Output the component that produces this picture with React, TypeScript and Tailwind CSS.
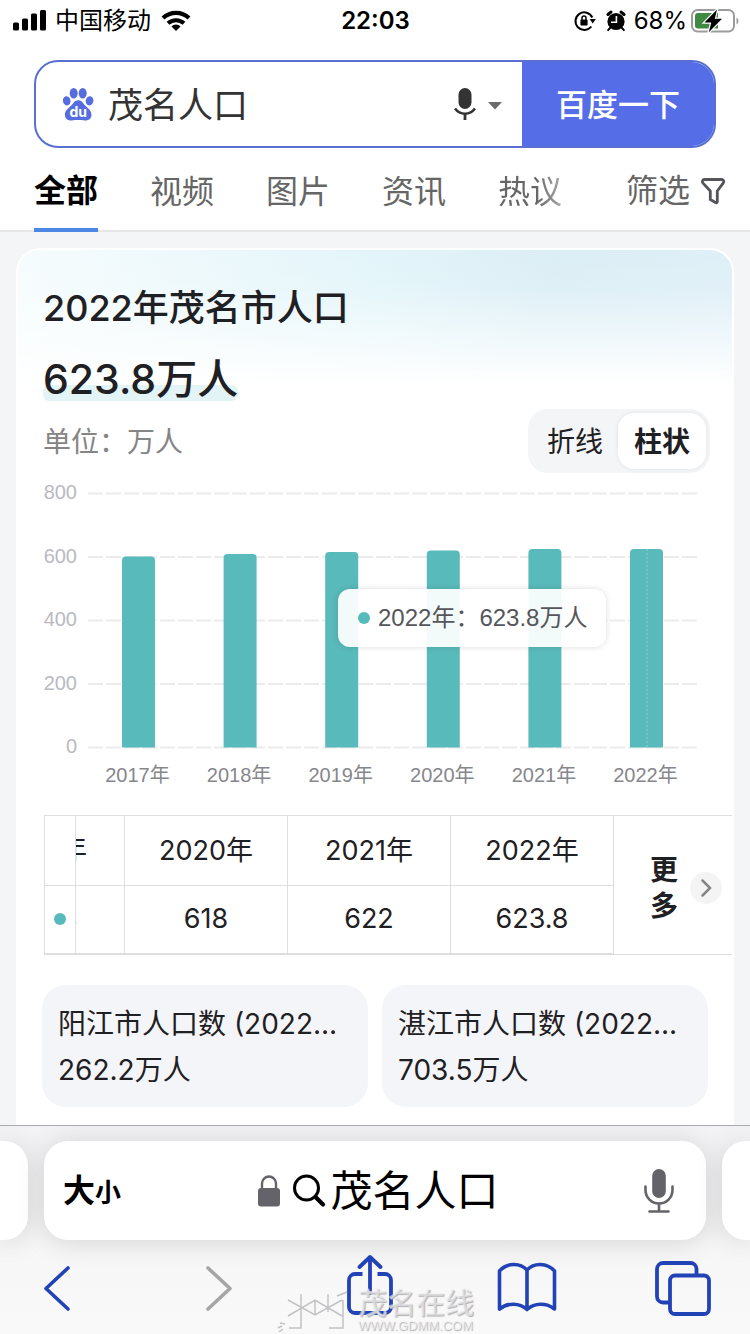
import { useState } from "react";

interface YearValue {
  year: number;
  value: number;
}

const population: YearValue[] = [
  { year: 2017, value: 600 },
  { year: 2018, value: 608 },
  { year: 2019, value: 614 },
  { year: 2020, value: 619 },
  { year: 2021, value: 624 },
  { year: 2022, value: 624 },
];

const tableYears = [
  { year: "2020年", value: "618" },
  { year: "2021年", value: "622" },
  { year: "2022年", value: "623.8" },
];

const tabs = ["全部", "视频", "图片", "资讯", "热议"];

const related = [
  { title: "阳江市人口数 (2022...", value: "262.2万人" },
  { title: "湛江市人口数 (2022...", value: "703.5万人" },
];

function StatusBar() {
  return (
    <div className="grid h-10 grid-cols-[1fr_auto_1fr] items-center pl-3 pr-[11px] pt-0.5 text-2xl text-black">
      <div className="flex items-center gap-2">
        <svg width="35" height="22" viewBox="0 0 35 22" fill="#000">
          <rect x="1" y="12.500" width="6" height="8" rx="1.5" />
          <rect x="10" y="8.500" width="6" height="12" rx="1.5" />
          <rect x="19" y="3.500" width="6" height="17" rx="1.5" />
          <rect x="28" y="0" width="6" height="20.500" rx="1.5" />
        </svg>
        <span>中国移动</span>
        <svg width="34" height="24" viewBox="0 0 34 24" fill="none" stroke="#000">
          <path d="M4 9a19 19 0 0 1 26 0" strokeWidth="4.2" />
          <path d="M9 14.300a12 12 0 0 1 16 0" strokeWidth="4" />
          <path d="M17 22l-4.600-4.600a6.600 6.600 0 0 1 9.200 0z" fill="#000" stroke="none" />
        </svg>
      </div>
      <span className="font-semibold">22:03</span>
      <div className="flex items-center justify-end">
        <svg className="mr-2.5" width="22" height="22" viewBox="0 0 22 22" fill="none" stroke="#000">
          <path d="M18.300 7.500A8.800 8.800 0 1 0 17.300 16.500" strokeWidth="2" />
          <path d="M15.600 9h6.200l-3.100 4.600z" fill="#000" stroke="none" />
          <rect x="6.400" y="9.600" width="7.200" height="6" rx="1" fill="#000" stroke="none" />
          <path d="M8 10V8a2 2 0 0 1 4 0v2" strokeWidth="1.5" />
        </svg>
        <svg className="mr-2" width="20" height="22" viewBox="0 0 20 22">
          <circle cx="10" cy="11.5" r="8.6" fill="#000" />
          <path d="M2 4.500L5 2M18 4.500L15 2" stroke="#000" strokeWidth="3" strokeLinecap="round" />
          <path d="M4.500 17.500l-2.400 2.600M15.500 17.500l2.400 2.600" stroke="#000" strokeWidth="2" strokeLinecap="round" />
          <path d="M10.400 6v6.200H5" stroke="#fff" strokeWidth="1.6" fill="none" />
        </svg>
        <span>68%</span>
        <svg className="ml-1" width="48" height="24" viewBox="0 0 48 24">
          <rect x="1" y="1" width="42" height="21.5" rx="5.5" fill="none" stroke="#9c9c9c" strokeWidth="2" />
          <path d="M45.5 8.5c2.6 1.5 2.6 5.500 0 7z" fill="#9c9c9c" />
          <path d="M7 4h20v15.500H7a3 3 0 0 1-3-3V7a3 3 0 0 1 3-3z" fill="#418a43" />
          <path
            d="M26 .5L13.500 13.500h6.800L17.800 23.200 31 9.800h-7.200z"
            fill="#000"
            stroke="#fff"
            strokeWidth="2.4"
            paintOrder="stroke"
          />
        </svg>
      </div>
    </div>
  );
}

function PawLogo() {
  return (
    <svg className="shrink-0" width="32" height="34" viewBox="0 0 32 34" fill="#566de0">
      <ellipse cx="11.700" cy="6.200" rx="4" ry="5.200" />
      <ellipse cx="20.700" cy="6.200" rx="4" ry="5.200" />
      <ellipse cx="4.700" cy="13.800" rx="3.800" ry="4.600" transform="rotate(-12 4.700 13.800)" />
      <ellipse cx="27.600" cy="13.800" rx="3.800" ry="4.600" transform="rotate(12 27.600 13.800)" />
      <path d="M16.200 13.200c2.600 0 4.200 1.600 5.600 3.800 1.800 2.800 7.700 5.500 7.700 10.700 0 4-3 5.900-6.500 5.700-2.800-.2-4.600-.4-6.800-.4s-4 .2-6.800.4c-3.500.2-6.500-1.700-6.500-5.700 0-5.200 5.900-7.900 7.700-10.700 1.400-2.200 3-3.800 5.600-3.800z" />
      <text x="16.200" y="29.800" textAnchor="middle" fontSize="14" fontWeight="700" fill="#fff">
        du
      </text>
    </svg>
  );
}

function SearchBox() {
  return (
    <form
      className="mx-[34px] mt-5 flex h-[88px] overflow-hidden rounded-3xl border-2 border-[#596fd2]"
      onSubmit={(e) => e.preventDefault()}
    >
      <div className="flex min-w-0 flex-1 items-center pl-[26px] pr-5">
        <PawLogo />
        <input
          aria-label="搜索"
          defaultValue="茂名人口"
          className="ml-3.5 min-w-0 flex-1 bg-transparent pt-0.5 text-[35px] text-[#333] outline-none"
        />
        <button type="button" aria-label="语音搜索">
          <svg width="22" height="34" viewBox="0 0 22 34" fill="none" stroke="#333">
            <rect x="4.500" y="1" width="13" height="21" rx="6.500" fill="#333" stroke="none" />
            <path d="M1 21.500c5 7 15 7 20 0" strokeWidth="2.600" />
            <path d="M11 26v7" strokeWidth="2.800" />
          </svg>
        </button>
        <svg className="ml-3 mt-1" width="14" height="8" viewBox="0 0 14 8">
          <path d="M0 0h14L7 7.500z" fill="#6b6b6b" />
        </svg>
      </div>
      <button type="submit" className="w-48 shrink-0 bg-[#566de8] pt-0.5 text-[31px] font-medium text-white">
        百度一下
      </button>
    </form>
  );
}

function TabBar() {
  return (
    <nav className="flex h-[84px] items-stretch border-b-2 border-[#e5e6e8] pl-[34px] pr-6 text-[32px] text-[#666]">
      <div className="flex flex-1 gap-[52px]">
        {tabs.map((tab, i) => (
          <a
            key={tab}
            href="#"
            className={
              i === 0
                ? "-mb-0.5 flex items-center whitespace-nowrap border-b-4 border-[#4e86e4] pt-1.5 font-bold text-black"
                : i === tabs.length - 1
                  ? "flex items-center whitespace-nowrap bg-linear-to-r from-[#666] from-60% to-[#aaa] bg-clip-text pt-1.5 text-transparent"
                  : "flex items-center whitespace-nowrap pt-1.5"
            }
          >
            {tab}
          </a>
        ))}
      </div>
      <button type="button" className="flex items-center gap-2.5 pt-1">
        筛选
        <svg width="26" height="28" viewBox="0 0 26 28" fill="none" stroke="#545459" strokeWidth="2.800" strokeLinejoin="round">
          <path d="M4.500 2.500h17c2 0 2.900 2 1.700 3.600L17.300 14v10.600c0 1-1 1.400-1.800.9l-5.200-3V14L3 6.100C1.700 4.500 2.500 2.500 4.500 2.500z" />
        </svg>
      </button>
    </nav>
  );
}

function BarChart() {
  const baseline = 265;
  const step = 101.6;

  return (
    <div className="relative mt-[9px]">
      <svg viewBox="0 0 674 312" className="w-full" fontFamily="'Liberation Sans', 'Noto Sans CJK SC', sans-serif">
        {[800, 600, 400, 200, 0].map((tick) => {
          const y = baseline - tick * 0.3175;
          return (
            <g key={tick}>
              <text x="35" y={y + 6} textAnchor="end" fontSize="20" fill="#b9babf">
                {tick}
              </text>
              <path d={`M46 ${y + 0.5}H655`} stroke="#ebebec" strokeWidth="2" strokeDasharray="15 3" />
            </g>
          );
        })}
        {population.map((p, i) => {
          const cx = 96.5 + i * step;
          const top = baseline - p.value * 0.3175;
          return (
            <g key={p.year}>
              <path
                d={`M${cx - 16.5} ${baseline + 0.5}V${top + 4}q0 -4 4 -4h25q4 0 4 4V${baseline + 0.5}z`}
                fill="#59babb"
              />
              {i === population.length - 1 && (
                <path d={`M${cx + 0.5} ${top}V${baseline}`} stroke="#8fd0d1" strokeWidth="1" strokeDasharray="2 2" />
              )}
              <text x={cx - 1} y="300" textAnchor="middle" fontSize="20" fill="#86878d">
                {p.year}年
              </text>
            </g>
          );
        })}
      </svg>
      {/* Tooltip for the selected year */}
      <div className="absolute left-[296px] top-[107px] flex h-[58px] items-center gap-2 whitespace-nowrap rounded-xl bg-white/93 pl-5 pr-[19px] font-['Liberation_Sans','Noto_Sans_CJK_SC',sans-serif] text-2xl text-[#55565b] shadow-[0_0_6px_rgba(0,0,0,0.14)]">
        <span className="size-3 rounded-full bg-[#59babb]" />
        2022年：623.8万人
      </div>
    </div>
  );
}

function DataTable() {
  return (
    <div className="mt-[21px] flex border-t border-[#dedede]">
      <div className="min-w-0 flex-1">
        <table className="w-full table-fixed border-collapse text-[27px] text-[#1f2023]">
          <colgroup>
            <col className="w-[31px]" />
            <col className="w-[49px]" />
            <col />
            <col />
            <col />
          </colgroup>
          <tbody>
            <tr className="h-[69px] border-b border-[#dedede]">
              <td className="border-x border-[#dedede]" />
              <td className="border-r border-[#dedede] p-0">
                <div className="flex justify-end overflow-hidden">
                  <span className="w-[162px] shrink-0 text-center">2019年</span>
                </div>
              </td>
              {tableYears.map((c) => (
                <td key={c.year} className="border-r border-[#dedede] p-0 pt-0.5 text-center">
                  {c.year}
                </td>
              ))}
            </tr>
            <tr className="h-[69px] border-b-2 border-[#dedede]">
              <td className="border-x border-[#dedede] p-0">
                <span className="mx-auto block size-3 rounded-full bg-[#59babb]" />
              </td>
              <td className="border-r border-[#dedede] p-0">
                <div className="flex justify-end overflow-hidden">
                  <span className="w-[162px] shrink-0 text-center">616.4</span>
                </div>
              </td>
              {tableYears.map((c) => (
                <td key={c.year} className="border-r border-[#dedede] p-0 text-center">
                  {c.value}
                </td>
              ))}
            </tr>
          </tbody>
        </table>
      </div>
      <button
        type="button"
        className="flex w-[118px] shrink-0 items-center justify-end gap-3 border-b border-[#dedede] pr-2.5 pt-1.5 text-[28px] font-bold leading-9 text-[#1f2023]"
      >
        <span className="w-7">更多</span>
        <span className="flex size-8 items-center justify-center rounded-full bg-[#f4f4f4]">
          <svg width="12" height="18" viewBox="0 0 12 18" fill="none" stroke="#858585" strokeWidth="2.500" strokeLinecap="round">
            <path d="M2.500 1.500L10 9l-7.500 7.500" />
          </svg>
        </span>
      </button>
    </div>
  );
}

function PopulationCard() {
  const [mode, setMode] = useState("柱状");

  return (
    <section className="mx-4 mt-4 flex-1 rounded-t-3xl border-x-2 border-t-2 border-white bg-white bg-[linear-gradient(to_bottom,rgba(255,255,255,0)_0px,rgba(255,255,255,0.1)_40px,rgba(255,255,255,1)_135px),linear-gradient(to_right,#f6fcfd,#e3f5fa_50%,#dbeef5_75%,#deeff7)] pt-7 text-[#1f2023]">
      <div className="pl-[25px] pr-[22px]">
        <h1 className="text-[36px] font-medium leading-[60px]">2022年茂名市人口</h1>
        <p className="relative z-0 mt-2 w-fit text-[41px] font-medium leading-[66px]">
          623.8万人
          <span className="absolute inset-x-0 bottom-[11px] -z-10 h-4 rounded-md bg-[#e2f4f5]" />
        </p>
        <div className="-mt-[3px] flex items-center justify-between">
          <span className="pt-0.5 text-[28px] text-[#858585]">单位：万人</span>
          <div className="flex h-16 rounded-[20px] bg-[#f4f5f7] p-1 text-[28px]">
            {["折线", "柱状"].map((m) => (
              <button
                key={m}
                type="button"
                onClick={() => setMode(m)}
                className={
                  m === mode
                    ? "w-[88px] rounded-2xl bg-white pt-0.5 font-bold shadow-[0_0_4px_rgba(0,0,0,0.08)]"
                    : "w-[86px] pt-0.5"
                }
              >
                {m}
              </button>
            ))}
          </div>
        </div>
      </div>
      <div className="pl-6 pr-4">
        <BarChart />
      </div>
      <div className="pl-[26px]">
        <DataTable />
      </div>
      <div className="grid grid-cols-2 gap-3.5 px-6 pb-[18px] pt-[30px]">
        {related.map((r) => (
          <a key={r.title} href="#" className="rounded-3xl bg-[#f4f5f8] px-4 pb-3.5 pt-4 text-[28px] leading-[46px]">
            <span className="block truncate">{r.title}</span>
            <span className="block">{r.value}</span>
          </a>
        ))}
      </div>
    </section>
  );
}

function AddressBar() {
  const pill = "h-[99px] bg-white shadow-[0_2px_28px_rgba(0,0,0,0.14)]";
  return (
    <div className="flex gap-4 pt-[15px]">
      <div className={`${pill} w-7 rounded-r-3xl`} />
      <div className={`${pill} grid flex-1 grid-cols-[1fr_auto_1fr] items-center rounded-3xl pl-[19px] pr-4 text-black`}>
        <button type="button" className="flex items-baseline justify-self-start font-bold">
          <span className="text-[32px]">大</span>
          <span className="text-[26px]">小</span>
        </button>
        <button type="button" className="flex items-center pl-1 text-[42px]">
          <svg className="mr-3" width="22" height="32" viewBox="0 0 22 32">
            <rect x="0" y="13" width="22" height="18.500" rx="3" fill="#646369" />
            <path d="M4 14V8.500a7 7 0 0 1 14 0V14" fill="none" stroke="#646369" strokeWidth="2.400" />
          </svg>
          <svg className="mr-1" width="34" height="34" viewBox="0 0 34 34" fill="none" stroke="#000">
            <circle cx="14.500" cy="14" r="12" strokeWidth="3" />
            <path d="M23.500 23l7.500 7.500" strokeWidth="4.200" strokeLinecap="round" />
          </svg>
          茂名人口
        </button>
        <button type="button" aria-label="听写" className="mr-4 justify-self-end">
          <svg width="30" height="44" viewBox="0 0 30 44" fill="none" stroke="#646369" strokeWidth="2.600" strokeLinecap="round">
            <rect x="8.200" y="0" width="13.600" height="29" rx="6.800" fill="#646369" stroke="none" />
            <path d="M1.500 17.500V21a13.500 13.500 0 0 0 27 0v-3.500M15 35v7M5.500 42.500h19" />
          </svg>
        </button>
      </div>
      <div className={`${pill} w-7 rounded-l-3xl`} />
    </div>
  );
}

function Toolbar() {
  return (
    <div className="relative flex flex-1 items-start justify-between pl-[27px] pr-[37px] pt-3.5">
      <button type="button" aria-label="后退" className="flex w-15 justify-center pt-3">
        <svg width="34" height="46" viewBox="0 0 34 46" fill="none" stroke="#2243b6" strokeWidth="3.600" strokeLinecap="round" strokeLinejoin="round">
          <path d="M28 2L6 22.500 28 43" />
        </svg>
      </button>
      <button type="button" aria-label="前进" className="flex w-15 justify-end pr-2 pt-3">
        <svg width="34" height="46" viewBox="0 0 34 46" fill="none" stroke="#a6a6a6" strokeWidth="3.600" strokeLinecap="round" strokeLinejoin="round">
          <path d="M6 2l22 20.500L6 43" />
        </svg>
      </button>
      <button type="button" aria-label="分享" className="flex w-15 justify-center">
        <svg width="50" height="64" viewBox="0 0 50 64" fill="none" stroke="#2243b6" strokeWidth="3.800">
          <path d="M17.500 20H10a6 6 0 0 0-6 6v27a6 6 0 0 0 6 6h30a6 6 0 0 0 6-6V26a6 6 0 0 0-6-6h-7.500" />
          <path d="M25 39V4M14.500 13L25 3l10.500 10" strokeLinecap="round" strokeLinejoin="round" />
        </svg>
      </button>
      <button type="button" aria-label="书签" className="flex w-15 justify-center pt-2">
        <svg width="60" height="50" viewBox="0 0 60 50" fill="none" stroke="#2243b6" strokeWidth="3.600" strokeLinejoin="round">
          <path d="M2.500 9C10 .5 23 .5 30 8 37 .5 50 .5 57.500 9v38c-8-6.500-20-6.500-27.500.5-7.500-7-19.500-7-27.500-.5zM30 8v39.500" />
        </svg>
      </button>
      <button type="button" aria-label="标签页" className="flex w-15 justify-center pt-1.5">
        <svg width="58" height="58" viewBox="0 0 58 58" fill="none" stroke="#2243b6" strokeWidth="3.800">
          <path d="M15 42.500H9a6 6 0 0 1-6-6V9a6 6 0 0 1 6-6h27.500a6 6 0 0 1 6 6v6" />
          <rect x="16" y="15.500" width="39" height="38.500" rx="5" />
        </svg>
      </button>
      {/* Site stamp */}
      <div className="pointer-events-none absolute bottom-0 left-[277px] flex items-end gap-1 text-[#f4f4f6]/60">
        <svg width="77" height="44" viewBox="0 0 77 44" fill="none" stroke="#c2c2c4" strokeWidth="1.500">
          <path d="M11 10l27 15 27-15M11 26l27-16 27 16M38 10v15M24 4v34H12M51 4v18M66 10v28H52M60 6l10-4M1 38l4-2M3 33l5 1M2 42l4-3" />
        </svg>
        <div className="flex flex-col [text-shadow:1px_1px_1px_#b0b0b4]">
          <span className="text-[29px] font-medium leading-7">茂名在线</span>
          <span className="font-['Liberation_Sans',sans-serif] text-[13px] leading-4">WWW.GDMM.COM</span>
        </div>
      </div>
    </div>
  );
}

export default function App() {
  return (
    <div
      lang="zh-CN"
      className="flex min-h-screen flex-col overflow-hidden bg-white font-['Inter','Noto_Sans_CJK_SC',sans-serif]"
    >
      <header>
        <StatusBar />
        <SearchBox />
        <TabBar />
      </header>
      <main className="flex flex-1 flex-col bg-[#f4f5f7]">
        <PopulationCard />
      </main>
      <footer className="flex h-[209px] flex-col overflow-hidden border-t border-[#a9aaaf] bg-linear-to-b from-[#f3f3f5] to-[#f9f9f9]">
        <AddressBar />
        <Toolbar />
      </footer>
    </div>
  );
}
